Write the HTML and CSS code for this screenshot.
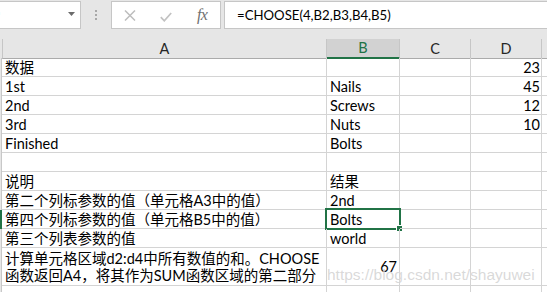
FILE: index.html
```html
<!DOCTYPE html>
<html lang="zh-CN">
<head>
<meta charset="utf-8">
<title>CHOOSE</title>
<link rel="stylesheet" href="styles.css">
</head>
<body>
<div class="app">
  <div class="fbar">
    <div class="namebox">
      <span class="nb-text">B9</span>
      <svg class="nb-caret" width="7" height="4" viewBox="0 0 7 4"><path d="M0 0H7L3.5 4Z" fill="#6b6b6b"/></svg>
    </div>
    <div class="grip"><i></i><i></i><i></i></div>
    <div class="btns">
      <span class="slot"><svg width="12" height="11" viewBox="0 0 12 11"><path d="M1 0.5L11 10.5M11 0.5L1 10.5" stroke="#bdbdbd" stroke-width="1.5" fill="none"/></svg></span>
      <span class="slot"><svg class="chk" width="12" height="10" viewBox="0 0 12 10"><path d="M0.8 5.2L4.3 8.8L11.2 1" stroke="#c2c2c2" stroke-width="1.7" fill="none"/></svg></span>
      <span class="slot fx">fx</span>
    </div>
    <div class="formula">=CHOOSE(4,B2,B3,B4,B5)</div>
  </div>

  <div class="sheet">
    <div class="row hdr">
      <div class="hstub"></div>
      <div class="h ha">A</div>
      <div class="h sel">B</div>
      <div class="h">C</div>
      <div class="h">D</div>
      <div class="h he"></div>
    </div>
    <div class="row">
      <div class="stub"></div><div class="c">数据</div><div class="c"></div><div class="c"></div><div class="c num">23</div><div class="c e"></div>
    </div>
    <div class="row">
      <div class="stub"></div><div class="c">1st</div><div class="c">Nails</div><div class="c"></div><div class="c num">45</div><div class="c e"></div>
    </div>
    <div class="row">
      <div class="stub"></div><div class="c">2nd</div><div class="c">Screws</div><div class="c"></div><div class="c num">12</div><div class="c e"></div>
    </div>
    <div class="row">
      <div class="stub"></div><div class="c">3rd</div><div class="c">Nuts</div><div class="c"></div><div class="c num">10</div><div class="c e"></div>
    </div>
    <div class="row">
      <div class="stub"></div><div class="c">Finished</div><div class="c">Bolts</div><div class="c"></div><div class="c"></div><div class="c e"></div>
    </div>
    <div class="row">
      <div class="stub"></div><div class="c"></div><div class="c"></div><div class="c"></div><div class="c"></div><div class="c e"></div>
    </div>
    <div class="row">
      <div class="stub"></div><div class="c">说明</div><div class="c">结果</div><div class="c"></div><div class="c"></div><div class="c e"></div>
    </div>
    <div class="row">
      <div class="stub"></div><div class="c">第二个列标参数的值（单元格A3中的值）</div><div class="c">2nd</div><div class="c"></div><div class="c"></div><div class="c e"></div>
    </div>
    <div class="row">
      <div class="stub on"></div><div class="c">第四个列标参数的值（单元格B5中的值）</div><div class="c active">Bolts<span class="selbox"><span class="handle"></span></span></div><div class="c"></div><div class="c"></div><div class="c e"></div>
    </div>
    <div class="row">
      <div class="stub"></div><div class="c">第三个列表参数的值</div><div class="c">world</div><div class="c"></div><div class="c"></div><div class="c e"></div>
    </div>
    <div class="row tall">
      <div class="stub"></div><div class="c wrap"><span>计算单元格区域d2:d4中所有数值的和。CHOOSE<br>函数返回A4，将其作为SUM函数区域的第二部分</span></div><div class="c num b">67</div><div class="c"></div><div class="c"></div><div class="c e"></div>
    </div>
    <div class="row">
      <div class="stub"></div><div class="c"></div><div class="c"></div><div class="c"></div><div class="c"></div><div class="c e"></div>
    </div>
  </div>

  <div class="watermark">https://blog.csdn.net/shayuwei</div>
</div>
</body>
</html>
```

FILE: styles.css
```css
html, body {
  margin: 0;
  padding: 0;
  background: #ffffff;
}

body {
  width: 547px;
  height: 292px;
  overflow: hidden;
  font-family: Lato, "Noto Sans CJK SC", sans-serif;
  color: #000;
}

.app {
  position: relative;
  width: 547px;
  height: 292px;
  overflow: hidden;
}

/* formula bar */
.fbar {
  display: flex;
  align-items: flex-start;
  height: 39px;
  background: #e6e6e6;
}

.namebox {
  margin-top: 1px;
  margin-left: -23px;
  width: 104px;
  height: 28px;
  box-sizing: border-box;
  background: #fff;
  border: 1px solid #c6c6c6;
  display: flex;
  align-items: center;
  justify-content: space-between;
  padding: 0 5px 0 4px;
  font-size: 15px;
  line-height: 26px;
}

.nb-caret {
  display: block;
  margin-top: -2px;
}

.grip {
  margin-left: 14px;
  margin-top: 10px;
  display: flex;
  flex-direction: column;
  gap: 2px;
}

.grip i {
  display: block;
  width: 2px;
  height: 2px;
  background: #a8a8a8;
}

.btns {
  margin-left: 14px;
  margin-top: 1px;
  width: 110px;
  height: 28px;
  box-sizing: border-box;
  background: #fff;
  border: 1px solid #c6c6c6;
  display: flex;
  align-items: center;
}

.slot {
  width: 36px;
  height: 26px;
  display: flex;
  align-items: center;
  justify-content: center;
}

.slot svg {
  display: block;
}

.chk {
  margin-top: 3px;
}

.fx {
  font-family: "Liberation Serif", serif;
  font-style: italic;
  font-size: 16px;
  color: #707070;
  letter-spacing: -0.5px;
  padding-left: 1px;
}

.formula {
  margin-left: 3px;
  margin-top: 1px;
  margin-right: -4px;
  flex: 1;
  height: 28px;
  box-sizing: border-box;
  background: #fff;
  border: 1px solid #c6c6c6;
  padding-left: 12px;
  font-size: 13.2px;
  line-height: 26px;
  white-space: nowrap;
}

/* sheet */
.row {
  display: grid;
  grid-template-columns: 2px 325px 73px 71px 71px 1fr;
  height: 19px;
}

.row.tall {
  height: 38px;
}

.hdr {
  background: #e6e6e6;
}

.hstub {
  border-bottom: 1px solid #ababab;
}

.h {
  box-sizing: border-box;
  border-right: 1px solid #c6c6c6;
  border-bottom: 1px solid #ababab;
  display: flex;
  align-items: center;
  justify-content: center;
  font-size: 14.5px;
  line-height: 18px;
  color: #262626;
}

.h.ha {
  border-left: 1px solid #c6c6c6;
}

.h.sel {
  background: #d2d2d2;
  color: #217346;
  border-bottom: 2px solid #217346;
}

.h.he {
  border-right: none;
}

.stub {
  box-sizing: border-box;
  background: #e6e6e6;
  border-right: 1px solid #c8c8c8;
}

.stub.on {
  background: #217346;
  border-right-color: #217346;
}

.c {
  position: relative;
  box-sizing: border-box;
  border-right: 1px solid #d4d4d4;
  border-bottom: 1px solid #d4d4d4;
  padding: 0 3px 0 3px;
  font-size: 14.5px;
  line-height: 17px;
  display: flex;
  align-items: flex-end;
  white-space: nowrap;
  min-width: 0;
}

.c.e {
  border-right: none;
}

.c.num {
  justify-content: flex-end;
  padding-right: 1px;
}

.c.num.b {
  padding-right: 2px;
}

.tall .c {
  align-items: center;
}

.c.wrap {
  align-items: center;
  overflow: visible;
}

.selbox {
  position: absolute;
  left: -2px;
  top: -2px;
  width: 76px;
  height: 22px;
  box-sizing: border-box;
  border: 2px solid #217346;
}

.handle {
  position: absolute;
  right: -4px;
  bottom: -4px;
  width: 5px;
  height: 5px;
  background: #217346;
  border: 1px solid #fff;
}

.watermark {
  position: absolute;
  left: 327px;
  top: 267px;
  font-family: "Liberation Sans", sans-serif;
  font-size: 15.5px;
  line-height: 16px;
  color: rgba(185, 185, 185, 0.55);
  text-shadow: 0 0 1px rgba(255, 255, 255, 0.8);
  white-space: nowrap;
}
```
